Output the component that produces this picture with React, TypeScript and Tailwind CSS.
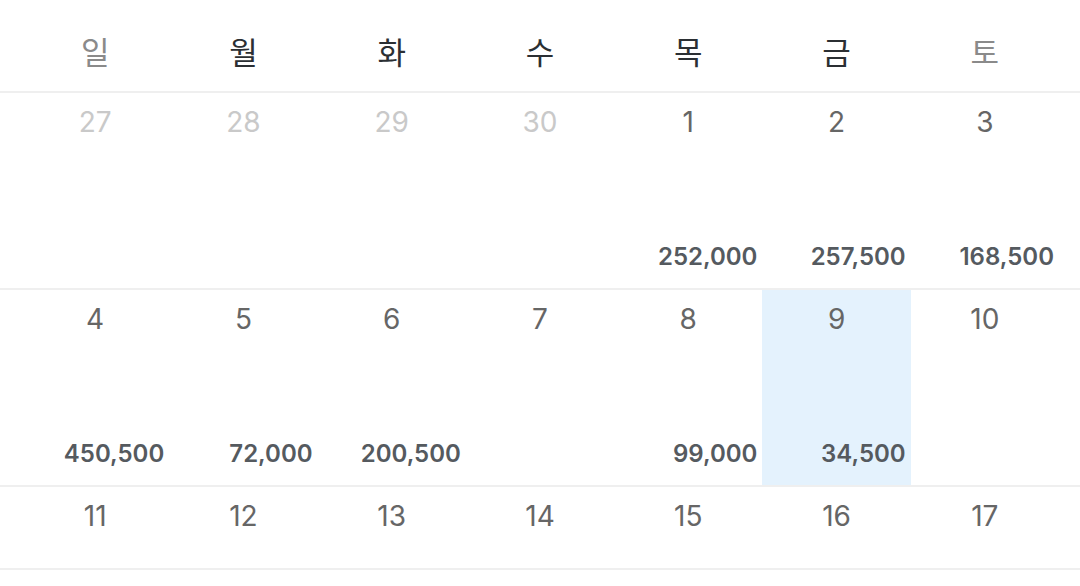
const DAYS = ['일', '월', '화', '수', '목', '금', '토'];

type Cell = { day: number; muted?: boolean; amount?: string; today?: boolean };

const WEEKS: { cells: Cell[]; tall: boolean }[] = [
  {
    tall: true,
    cells: [
      { day: 27, muted: true },
      { day: 28, muted: true },
      { day: 29, muted: true },
      { day: 30, muted: true },
      { day: 1, amount: '252,000' },
      { day: 2, amount: '257,500' },
      { day: 3, amount: '168,500' },
    ],
  },
  {
    tall: true,
    cells: [
      { day: 4, amount: '450,500' },
      { day: 5, amount: '72,000' },
      { day: 6, amount: '200,500' },
      { day: 7 },
      { day: 8, amount: '99,000' },
      { day: 9, amount: '34,500', today: true },
      { day: 10 },
    ],
  },
  {
    tall: false,
    cells: [
      { day: 11 },
      { day: 12 },
      { day: 13 },
      { day: 14 },
      { day: 15 },
      { day: 16 },
      { day: 17 },
    ],
  },
];

function DayCell({ cell }: { cell: Cell }) {
  return (
    <div className={`flex flex-col justify-between ${cell.today ? 'bg-[#e4f2fd]' : ''}`}>
      <div
        className={`pt-[15px] text-center text-[28px] leading-none ${
          cell.muted ? 'text-[#c9c9c9]' : 'text-[#666666]'
        }`}
      >
        {cell.day}
      </div>
      {cell.amount && (
        <div className="pb-[19px] pr-[5px] text-right text-[24px] font-semibold leading-none text-[#555a5f]">
          {cell.amount}
        </div>
      )}
    </div>
  );
}

export default function App() {
  return (
    <div
      className="w-[1080px] h-[586px] bg-white overflow-hidden"
      style={{ fontFamily: 'Inter, "Noto Sans CJK KR", sans-serif' }}
    >
      {/* Weekday header */}
      <div className="h-[93px] border-b-2 border-[#efefef] px-[21px] grid grid-cols-7 items-center">
        {DAYS.map((d, i) => (
          <div
            key={d}
            className={`text-center text-[31px] leading-none pt-[10px] ${
              i === 0 || i === 6 ? 'text-[#8a8a8a]' : 'text-[#2b2f33]'
            }`}
            style={{ fontFamily: '"Noto Sans CJK KR", sans-serif' }}
          >
            {d}
          </div>
        ))}
      </div>

      {/* Weeks */}
      {WEEKS.map((w, wi) => (
        <div
          key={wi}
          className={`border-b-2 border-[#efefef] px-[21px] grid grid-cols-7 ${
            w.tall ? 'h-[197px]' : 'h-[83px]'
          }`}
        >
          {w.cells.map((c) => (
            <DayCell key={`${wi}-${c.day}`} cell={c} />
          ))}
        </div>
      ))}
    </div>
  );
}
